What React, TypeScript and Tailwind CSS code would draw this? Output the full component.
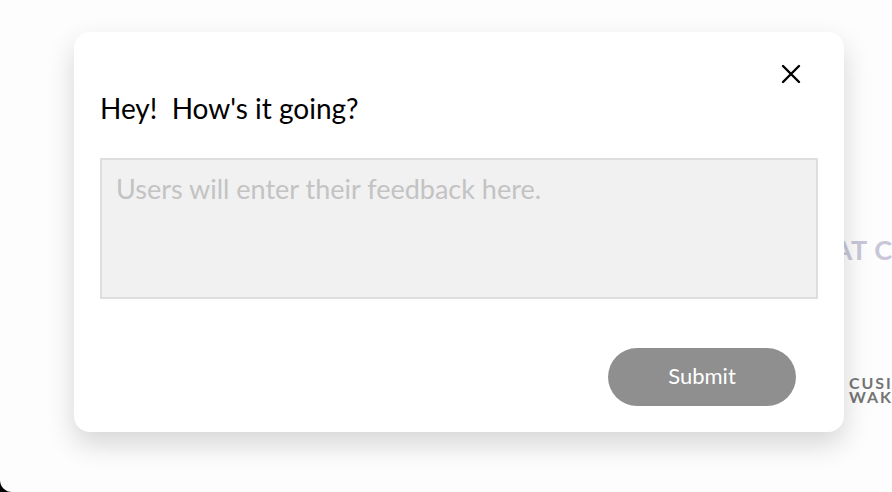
export default function App() {
    return (
        <div className="w-[892px] h-[492px] bg-black overflow-hidden">
            <div className="relative w-full h-full bg-[#fdfdfd] rounded-bl-[12px] overflow-hidden" style={{ fontFamily: 'Lato, "Noto Sans", sans-serif' }}>
                {/* page behind the modal */}
                <div className="absolute left-[812px] top-[230px] text-[27px] font-bold tracking-wide text-[#c8c6d8] whitespace-nowrap">HAT CO</div>
                <div className="absolute left-[849px] top-[376px] text-[16px] leading-[14px] font-bold tracking-[0.12em] text-[#747474] whitespace-nowrap">
                    CUSINE<br />WAKE
                </div>

                {/* modal */}
                <div className="absolute left-[74px] top-[32px] w-[770px] h-[400px] bg-white rounded-[16px] shadow-[0_12px_28px_rgba(0,0,0,0.16)] px-[26px] pt-[59px]">
                    <button className="absolute right-[41px] top-[30px] w-[24px] h-[24px] flex items-center justify-center">
                        <svg width="20" height="20" viewBox="0 0 20 20" fill="none" stroke="black" strokeWidth="2.4" strokeLinecap="round">
                            <path d="M2 2 L18 18 M18 2 L2 18" />
                        </svg>
                    </button>
                    <h2 className="text-[28px] leading-[34px] text-black whitespace-pre">Hey!  How's it going?</h2>
                    <textarea
                        className="mt-[33px] block w-[718px] h-[141px] bg-[#f1f1f1] border-2 border-[#dedede] px-[14px] py-[14px] text-[27px] leading-[30px] text-black placeholder:text-[#c3c3c3] resize-none outline-none"
                        placeholder="Users will enter their feedback here."
                    />
                    <div className="flex justify-end pr-[22px] mt-[49px]">
                        <button className="w-[188px] h-[58px] rounded-full bg-[#8f8f8f] text-white text-[22px] leading-[22px] pb-[2px]">Submit</button>
                    </div>
                </div>
            </div>
        </div>
    );
}
